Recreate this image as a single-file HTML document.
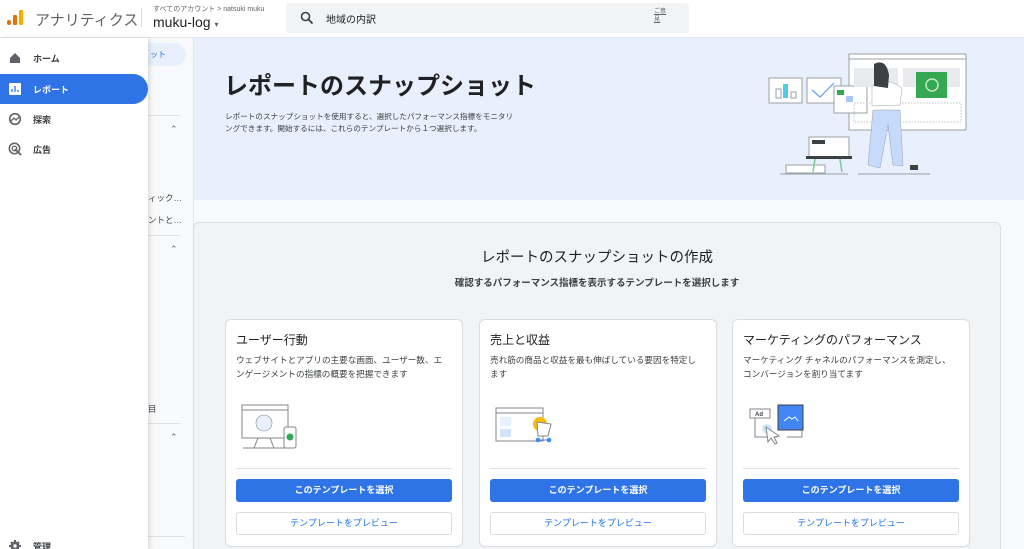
<!DOCTYPE html>
<html><head><meta charset="utf-8"><style>
*{box-sizing:border-box;margin:0;padding:0}
html,body{width:1024px;height:549px;overflow:hidden}
body{background:#f8f9fa;font-family:"Liberation Sans","Noto Sans CJK JP",sans-serif;position:relative;color:#202124}
.abs{position:absolute}
.hdr{left:0;top:0;width:1024px;height:38px;background:#fff;border-bottom:1px solid #e3e6ea}
.drawer{left:0;top:38px;width:148px;height:511px;background:#fff;box-shadow:2px 0 4px rgba(0,0,0,.12);z-index:5}
.nav{position:absolute;left:0;width:148px;height:30px;font-size:9px;font-weight:bold;color:#3c4043;display:flex;align-items:center;padding-left:33px}
.nav svg{position:absolute;left:8px;top:8px}
.card{position:absolute;top:319px;width:238px;height:228px;background:#fff;border:1px solid #dadce0;border-radius:6px}
.card h3{position:absolute;left:10px;top:11px;font-size:12px;font-weight:normal;color:#202124}
.card p{position:absolute;left:10px;top:33px;width:214px;font-size:8.6px;line-height:14px;color:#3c4043}
.card .ln{position:absolute;left:10px;right:10px;top:148px;border-top:1px solid #e0e0e0}
.b1{position:absolute;left:10px;right:10px;top:159px;height:23px;background:#2f74e6;border-radius:3px;color:#fff;font-size:9px;font-weight:bold;text-align:center;line-height:23px}
.b2{position:absolute;left:10px;right:10px;top:192px;height:23px;background:#fff;border:1px solid #dadce0;border-radius:3px;color:#1a73e8;font-size:9px;text-align:center;line-height:21px}
.ill{position:absolute;left:14px;top:82px}
</style></head><body>
<div class="abs hdr">
 <svg class="abs" style="left:6px;top:9px" width="18" height="18"><rect x="1" y="11" width="4" height="5" rx="2" fill="#e37400"/><rect x="7" y="6" width="4" height="10" rx="1" fill="#e37400"/><rect x="13" y="1" width="4" height="15" rx="1" fill="#f9ab00"/></svg>
 <div class="abs" style="left:35px;top:9px;font-size:15px;color:#5f6368">アナリティクス</div>
 <div class="abs" style="left:141px;top:8px;height:20px;border-left:1px solid #dadce0"></div>
 <div class="abs" style="left:153px;top:4px;font-size:7px;color:#5f6368">すべてのアカウント &gt; natsuki muku</div>
 <div class="abs" style="left:153px;top:14px;font-size:14px;color:#202124">muku-log <span style="font-size:8px;color:#5f6368">▾</span></div>
 <div class="abs" style="left:286px;top:3px;width:403px;height:30px;background:#f1f3f4;border-radius:4px">
  <svg class="abs" style="left:14px;top:8px" width="14" height="14"><circle cx="5.5" cy="5.5" r="4" fill="none" stroke="#3c4043" stroke-width="1.6"/><path d="M8.5 8.5l4 4" stroke="#3c4043" stroke-width="1.8"/></svg>
  <div class="abs" style="left:40px;top:8px;font-size:10px;color:#202124">地域の内訳</div>
  <div class="abs" style="left:368px;top:5px;font-size:6px;color:#5f6368;line-height:8px;text-decoration:underline">ご意<br>見</div>
 </div>
</div>
<div class="abs" style="left:148px;top:38px;width:45px;height:511px;background:#f8f9fa">
 <div class="abs" style="left:-20px;top:5px;width:58px;height:23px;background:#e8f0fe;border-radius:12px;font-size:8px;color:#1a73e8;padding:6px 0 0 22px">ット</div>
 <div class="abs" style="left:0;top:77px;width:32px;border-top:1px solid #e0e0e0"></div>
 <div class="abs" style="left:22px;top:86px;font-size:9px;color:#5f6368">⌃</div>
 <div class="abs" style="left:0;top:154px;font-size:8.5px;color:#3c4043">ィック…</div>
 <div class="abs" style="left:0;top:176px;font-size:8.5px;color:#3c4043">ントと…</div>
 <div class="abs" style="left:0;top:197px;width:32px;border-top:1px solid #e0e0e0"></div>
 <div class="abs" style="left:22px;top:206px;font-size:9px;color:#5f6368">⌃</div>
 <div class="abs" style="left:0;top:365px;font-size:8.5px;color:#3c4043">目</div>
 <div class="abs" style="left:0;top:385px;width:32px;border-top:1px solid #e0e0e0"></div>
 <div class="abs" style="left:22px;top:394px;font-size:9px;color:#5f6368">⌃</div>
 <div class="abs" style="left:0;top:498px;width:37px;border-top:1px solid #e0e0e0"></div>
</div>
<div class="abs" style="left:193px;top:38px;width:1px;height:511px;background:#e3e6ea"></div>
<div class="abs" style="left:194px;top:38px;width:830px;height:162px;background:#e8effd">
 <div class="abs" style="left:30px;top:28px;font-size:24px;font-weight:bold;color:#202124">レポートのスナップショット</div>
 <div class="abs" style="left:31px;top:73px;width:294px;font-size:7.6px;line-height:12px;color:#3c4043">レポートのスナップショットを使用すると、選択したパフォーマンス指標をモニタリングできます。開始するには、これらのテンプレートから１つ選択します。</div>
 <svg class="abs" style="left:546px;top:2px" width="284" height="150" viewBox="740 40 284 150">
  <g fill="none" stroke="#9aa0a6" stroke-width="1">
   <rect x="849" y="54" width="117" height="76" fill="#fff"/>
   <line x1="849" y1="59" x2="966" y2="59"/>
   <rect x="769" y="78" width="33" height="25" fill="#fff"/>
   <rect x="807" y="78" width="34" height="25" fill="#fff"/>
   <rect x="834" y="86" width="33" height="27" fill="#fff"/>
   <rect x="809" y="137" width="40" height="20" fill="#fff"/>
   <rect x="786" y="165" width="39" height="8" fill="#fff"/>
  </g>
  <rect x="854" y="68" width="44" height="19" fill="#e8eaed"/>
  <rect x="903" y="68" width="57" height="19" fill="#e8eaed"/>
  <rect x="916" y="72" width="31" height="26" fill="#34a853"/>
  <circle cx="932" cy="85" r="6" fill="none" stroke="#c8e6c9" stroke-width="1.5"/>
  <rect x="854" y="103" width="107" height="19" fill="none" stroke="#bdc1c6" stroke-dasharray="1.5 1.5"/>
  <rect x="783" y="84" width="5" height="14" fill="#4ecde6"/>
  <rect x="776" y="89" width="5" height="9" fill="none" stroke="#9aa0a6"/>
  <rect x="791" y="92" width="5" height="6" fill="none" stroke="#9aa0a6"/>
  <polyline points="812,90 820,97 834,83" fill="none" stroke="#669df6" stroke-width="1.2"/>
  <rect x="837" y="90" width="7" height="5" fill="#34a853"/><rect x="846" y="96" width="7" height="6" fill="#a8c7fa"/>
  <rect x="812" y="140" width="13" height="4" fill="#3c4043"/>
  <rect x="806" y="156" width="46" height="3" fill="#3c4043"/>
  <line x1="815" y1="159" x2="813" y2="172" stroke="#81c995" stroke-width="1.5"/><line x1="840" y1="159" x2="842" y2="172" stroke="#81c995" stroke-width="1.5"/>
  <line x1="780" y1="174" x2="848" y2="174" stroke="#9aa0a6"/><line x1="858" y1="174" x2="930" y2="174" stroke="#9aa0a6"/>
  <path d="M873 110 L868 165 L880 168 L888 125 L893 165 L903 166 L900 110 Z" fill="#c6dafc" stroke="#9aa0a6" stroke-width=".5"/>
  <path d="M872 86 Q886 76 902 88 L900 105 L872 106 Z" fill="#fff" stroke="#9aa0a6" stroke-width=".5"/>
  <path d="M874 64 Q886 58 889 75 L888 88 L874 86 Z" fill="#3c4043"/>
  <path d="M910 165 h8 v5 h-8z" fill="#3c4043"/>
 </svg>
</div>
<div class="abs" style="left:193px;top:222px;width:808px;height:340px;background:#f1f3f4;border:1px solid #dadce0;border-radius:6px"></div>
<div class="abs" style="left:193px;top:246px;width:808px;text-align:center;font-size:14.5px;color:#202124">レポートのスナップショットの作成</div>
<div class="abs" style="left:193px;top:275px;width:808px;text-align:center;font-size:9.5px;font-weight:bold;color:#3c4043">確認するパフォーマンス指標を表示するテンプレートを選択します</div>

<div class="card" style="left:225px">
 <h3>ユーザー行動</h3>
 <p>ウェブサイトとアプリの主要な画面、ユーザー数、エンゲージメントの指標の概要を把握できます</p>
 <svg class="ill" width="65" height="48"><rect x="2" y="3" width="46" height="33" fill="#fff" stroke="#80868b"/><line x1="2" y1="8" x2="48" y2="8" stroke="#80868b"/><ellipse cx="24" cy="21" rx="8" ry="8" fill="#e8f0fe" stroke="#80868b" stroke-width=".6"/><path d="M18 36 L14 46 M30 36 L34 46 M3 46 H46" stroke="#80868b"/><rect x="44" y="25" width="12" height="21" rx="2" fill="#fff" stroke="#80868b"/><circle cx="50" cy="35" r="3.5" fill="#34a853"/></svg>
 <div class="ln"></div><div class="b1">このテンプレートを選択</div><div class="b2">テンプレートをプレビュー</div>
</div>
<div class="card" style="left:479px">
 <h3>売上と収益</h3>
 <p>売れ筋の商品と収益を最も伸ばしている要因を特定します</p>
 <svg class="ill" width="65" height="48"><rect x="2" y="6" width="47" height="33" fill="#fff" stroke="#80868b"/><line x1="2" y1="11" x2="49" y2="11" stroke="#80868b"/><rect x="6" y="15" width="11" height="9" fill="#e8f0fe"/><rect x="6" y="27" width="11" height="8" fill="#d2e3fc"/><circle cx="46" cy="22" r="7" fill="#fbbc04"/><path d="M43 20 L57 22 L54 34 H44 Z" fill="#fff" stroke="#80868b"/><circle cx="44" cy="38" r="2.3" fill="#4285f4"/><circle cx="55" cy="38" r="2.3" fill="#4285f4"/><line x1="44" y1="38" x2="55" y2="38" stroke="#4285f4"/></svg>
 <div class="ln"></div><div class="b1">このテンプレートを選択</div><div class="b2">テンプレートをプレビュー</div>
</div>
<div class="card" style="left:732px">
 <h3>マーケティングのパフォーマンス</h3>
 <p>マーケティング チャネルのパフォーマンスを測定し、コンバージョンを割り当てます</p>
 <svg class="ill" width="65" height="52"><path d="M8 15 V35 H30 M40 35 H55 V28" fill="none" stroke="#80868b"/><rect x="3" y="7" width="20" height="9" fill="#fff" stroke="#80868b"/><text x="8" y="14" font-size="6" font-weight="bold" fill="#3c4043" font-family="Liberation Sans">Ad</text><rect x="31" y="3" width="25" height="25" fill="#4285f4" stroke="#3c4043"/><path d="M37 19 l5 -4 3 2 3 -2 3 4" fill="none" stroke="#fff"/><circle cx="20" cy="27" r="5" fill="#d2e3fc"/><path d="M19 25 L21 40 L24 36 L28 42 L30 41 L27 35 L32 34 Z" fill="#fff" stroke="#80868b"/></svg>
 <div class="ln"></div><div class="b1">このテンプレートを選択</div><div class="b2">テンプレートをプレビュー</div>
</div>

<div class="abs drawer">
 <div class="nav" style="top:5px"><svg width="14" height="14"><path d="M2 7 L7 2 L12 7 V12 H2 Z" fill="#5f6368"/></svg>ホーム</div>
 <div class="nav" style="top:36px;background:#2f74e6;color:#fff;border-radius:0 16px 16px 0"><svg width="14" height="14"><rect x="1" y="1" width="12" height="12" rx="1" fill="#fff"/><path d="M4 10V7M7 10V4M10 10V8" stroke="#2f74e6" stroke-width="1.3"/></svg>レポート</div>
 <div class="nav" style="top:66px"><svg width="14" height="14"><circle cx="7" cy="7" r="5.3" fill="none" stroke="#5f6368" stroke-width="1.6"/><path d="M3 9 L6 6 L8 8 L11 5" fill="none" stroke="#5f6368" stroke-width="1.3"/></svg>探索</div>
 <div class="nav" style="top:96px"><svg width="14" height="14"><circle cx="6.5" cy="6.5" r="5.2" fill="none" stroke="#5f6368" stroke-width="1.5"/><circle cx="6.5" cy="6.5" r="2.3" fill="none" stroke="#5f6368" stroke-width="1.3"/><path d="M7 7 L13 13" stroke="#5f6368" stroke-width="1.8"/></svg>広告</div>
 <div class="nav" style="top:493px"><svg width="14" height="14"><path d="M7 1v12M1 7h12M3 3l8 8M11 3l-8 8" stroke="#5f6368" stroke-width="2"/><circle cx="7" cy="7" r="4.5" fill="#5f6368"/><circle cx="7" cy="7" r="1.7" fill="#fff"/></svg>管理</div>
</div>
</body></html>
